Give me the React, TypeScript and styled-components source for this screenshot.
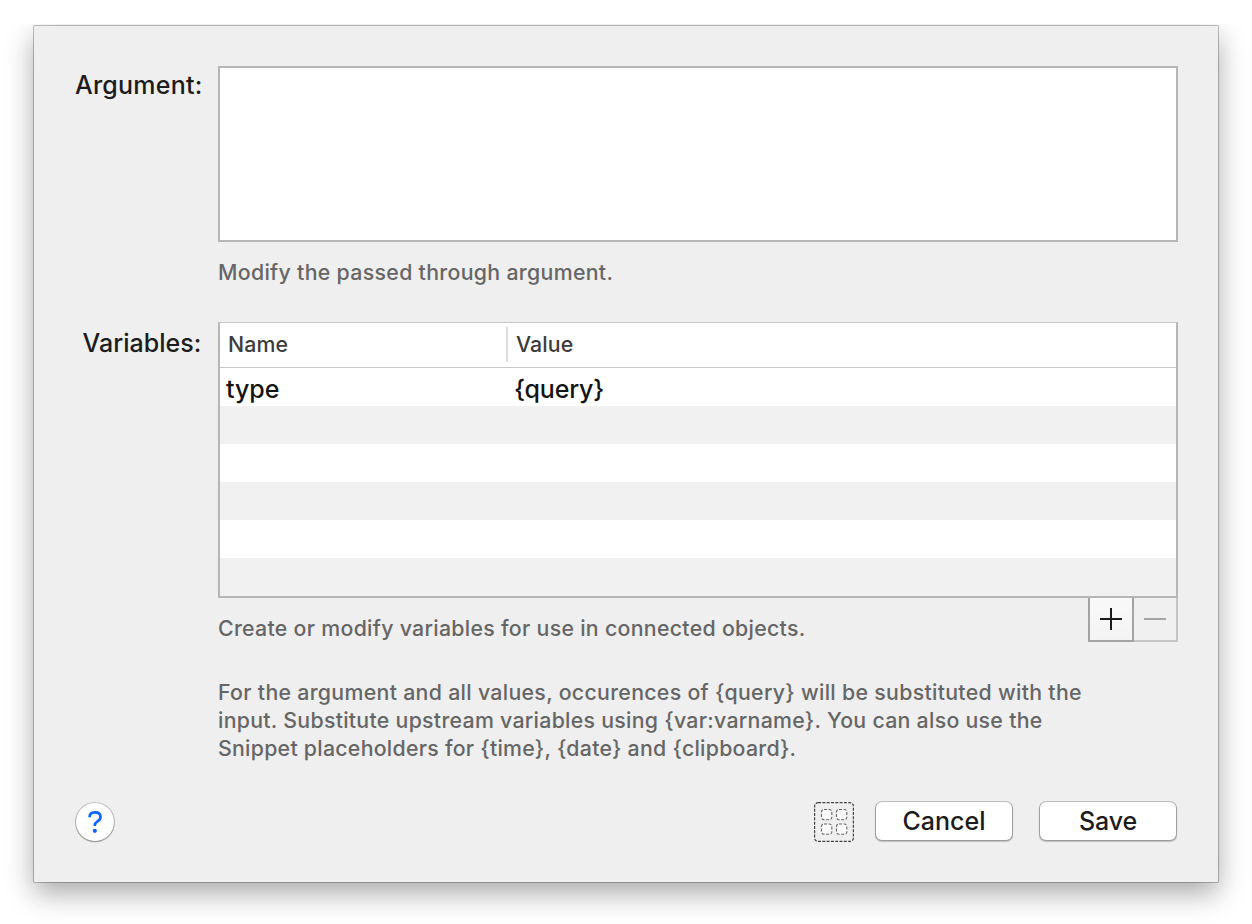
import React from 'react';
import styled, { createGlobalStyle } from 'styled-components';

const GlobalStyle = createGlobalStyle`
  * { box-sizing: border-box; }
  body { margin: 0; background: #fff; font-family: Inter, "Liberation Sans", sans-serif; font-weight: 450; color: #1c1c1c; }
  button { font: inherit; color: inherit; padding: 0; margin: 0; }
`;

const Stage = styled.main`
  height: 924px;
  padding-top: 24px;
  overflow: hidden;
`;

const SheetArea = styled.div`
  height: 900px;
  padding: 2px 34px 0;
  overflow: hidden;
`;

const Sheet = styled.section`
  display: flex;
  flex-direction: column;
  height: 856px;
  padding: 40px 41px 0 41px;
  background: #efefef;
  border-radius: 1px;
  box-shadow: 0 0 0 1px rgba(0, 0, 0, 0.24), 0 11px 29px rgba(0, 0, 0, 0.35);
`;

const Row = styled.div`
  display: grid;
  grid-template-columns: 127px 960px;
  column-gap: 16px;
`;

const Label = styled.div<{ $spacing: number; $top?: number }>`
  height: 38px;
  margin-top: ${(p) => p.$top ?? 0}px;
  padding-right: 0.5px;
  line-height: 38px;
  font-size: 25px;
  letter-spacing: ${(p) => p.$spacing}px;
  text-align: right;
  white-space: nowrap;
`;

const ArgumentBox = styled.div`
  height: 176px;
  background: #fff;
  border: 2px solid #b6b6b6;
`;

const Hint = styled.div<{ $spacing?: number; $top?: number }>`
  margin-top: ${(p) => p.$top ?? 0}px;
  font-size: 21.3px;
  line-height: 28px;
  letter-spacing: ${(p) => p.$spacing ?? 0}px;
  color: #666;
  white-space: nowrap;
`;

const ArgumentRow = styled(Row)`
  height: 256px;
`;

const VariablesRow = styled(Row)`
  height: 354px;
`;

const Table = styled.div`
  height: 276px;
  background: #fff;
  border: 2px solid #b6b6b6;
  border-top: 1px solid #c6c6c6;
`;

const TableHeader = styled.div`
  display: grid;
  grid-template-columns: 288px 1fr;
  height: 45px;
  padding-top: 4px;
  border-bottom: 1px solid #c8c8c8;
`;

const HeaderCell = styled.div<{ $divider?: boolean; $spacing: number }>`
  height: 35px;
  padding-left: 8px;
  border-right: ${(p) => (p.$divider ? '2px solid #dcdcdc' : '0')};
  font-size: 21.3px;
  line-height: 35px;
  letter-spacing: ${(p) => p.$spacing}px;
  color: #3c3c3c;
`;

const TableRow = styled.div`
  display: grid;
  grid-template-columns: 288px 1fr;
  height: 38px;
  line-height: 42px;
  font-size: 25px;
  color: #141414;
  &:nth-child(odd) { background: #f1f1f1; }
`;

const Cell = styled.div<{ $spacing: number }>`
  padding-left: 6px;
  letter-spacing: ${(p) => p.$spacing}px;
`;

const TableFooter = styled.div`
  display: flex;
  justify-content: space-between;
`;

const Stepper = styled.div`
  display: flex;
  height: 44px;
`;

const StepButton = styled.button<{ $disabled?: boolean }>`
  display: flex;
  align-items: center;
  justify-content: center;
  width: ${(p) => (p.$disabled ? 44 : 46)}px;
  height: 44px;
  border: 2px solid ${(p) => (p.$disabled ? '#c5c5c5' : '#a3a3a3')};
  border-top: 0;
  ${(p) => p.$disabled && 'border-left: 0;'}
  background: ${(p) => (p.$disabled ? '#f0f0f0' : 'linear-gradient(#f9f9f9, #f3f3f3)')};
`;

const Actions = styled.div`
  display: flex;
  align-items: flex-start;
  margin-top: 38px;
`;

const HelpButton = styled.button`
  display: flex;
  align-items: center;
  justify-content: center;
  width: 38px;
  height: 38px;
  margin: 3px auto 0 1px;
  border: 0;
  border-radius: 50%;
  background: #fff;
  box-shadow: 0 0 0 1px rgba(0, 0, 0, 0.18), 0 1px 1px 0.5px rgba(0, 0, 0, 0.2);
`;

const LayoutButton = styled.button`
  display: flex;
  width: 40px;
  height: 40px;
  margin: 2px 22px 0 0;
  border: 0;
  background: none;
`;

const PushButton = styled.button<{ $spacing: number }>`
  width: 136px;
  height: 38px;
  margin: 2px 1px 0 0;
  border: 0;
  border-radius: 6px;
  background: #fff;
  box-shadow: 0 0 0 1px rgba(0, 0, 0, 0.18), 0 1px 1px 0.5px rgba(0, 0, 0, 0.2);
  font-size: 25px;
  line-height: 38px;
  letter-spacing: ${(p) => p.$spacing}px;
  & + & { margin-left: 27px; }
`;

const cells = [[7.5, 7.5], [22.5, 7.5], [7.5, 22], [22.5, 22]];

export default function App() {
  return (
    <Stage>
      <GlobalStyle />
      <SheetArea>
        <Sheet>
          <ArgumentRow>
            <Label $spacing={0.22}>Argument:</Label>
            <div>
              <ArgumentBox />
              <Hint $top={16} $spacing={0.32}>Modify the passed through argument.</Hint>
            </div>
          </ArgumentRow>
          <VariablesRow>
            <Label $top={2} $spacing={0.05}>Variables:</Label>
            <div>
              <Table>
                <TableHeader>
                  <HeaderCell $divider $spacing={0.1}>Name</HeaderCell>
                  <HeaderCell $spacing={0.1}>Value</HeaderCell>
                </TableHeader>
                <TableRow>
                  <Cell $spacing={-0.05}>type</Cell>
                  <Cell $spacing={-0.2}>{'{query}'}</Cell>
                </TableRow>
                <TableRow />
                <TableRow />
                <TableRow />
                <TableRow />
                <TableRow />
              </Table>
              <TableFooter>
                <Hint $top={16} $spacing={0.3}>Create or modify variables for use in connected objects.</Hint>
                <Stepper>
                  <StepButton aria-label="Add">
                    <svg width="22" height="22" viewBox="0 0 22 22">
                      <path d="M0 11H22M11 0V22" stroke="#1a1a1a" strokeWidth="2" />
                    </svg>
                  </StepButton>
                  <StepButton $disabled aria-label="Remove">
                    <svg width="22" height="22" viewBox="0 0 22 22">
                      <path d="M0 11H22" stroke="#a4a4a4" strokeWidth="2" />
                    </svg>
                  </StepButton>
                </Stepper>
              </TableFooter>
            </div>
          </VariablesRow>
          <Row>
            <span />
            <div>
              <Hint $top={2} $spacing={0.31}>For the argument and all values, occurences of {'{query}'} will be substituted with the</Hint>
              <Hint $spacing={0.285}>input. Substitute upstream variables using {'{var:varname}'}. You can also use the</Hint>
              <Hint $spacing={0.27}>Snippet placeholders for {'{time}'}, {'{date}'} and {'{clipboard}'}.</Hint>
            </div>
          </Row>
          <Actions>
            <HelpButton aria-label="Help">
              <svg width="14" height="22" viewBox="0 0 14 22" fill="none">
                <path d="M1.5 6.2C1.6 3 3.8 1.4 6.9 1.4C10.3 1.4 12.5 3.2 12.5 5.9C12.5 8 11.4 9.2 9.5 10.4C7.5 11.7 6.8 12.6 6.8 14.2V15" stroke="#0a66ff" strokeWidth="2.7" />
                <circle cx="6.8" cy="19.8" r="2.1" fill="#0a66ff" />
              </svg>
            </HelpButton>
            <LayoutButton aria-label="Layout">
              <svg width="40" height="40" viewBox="0 0 40 40" fill="none" stroke="#444">
                <rect x="0.6" y="0.6" width="38.8" height="38.8" rx="3.5" strokeWidth="1.2" strokeDasharray="3 1.3" />
                {cells.map(([x, y]) => (
                  <rect key={`${x}-${y}`} x={x} y={y} width="10.3" height="10.3" rx="2.5" fill="#fafafa" stroke="#666" strokeWidth="1.1" strokeDasharray="3 1.6" />
                ))}
              </svg>
            </LayoutButton>
            <PushButton $spacing={0}>Cancel</PushButton>
            <PushButton $spacing={-0.15}>Save</PushButton>
          </Actions>
        </Sheet>
      </SheetArea>
    </Stage>
  );
}
